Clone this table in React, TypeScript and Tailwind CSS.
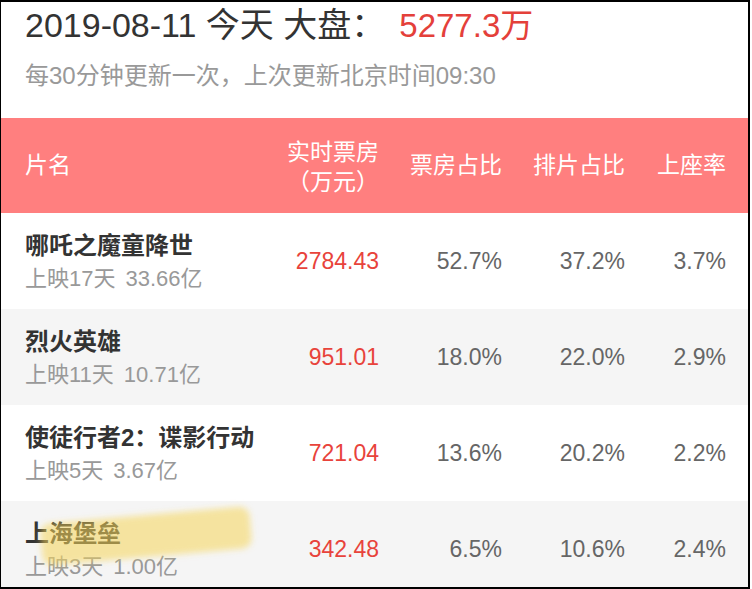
const font = "font-['Liberation_Sans','Noto_Sans_CJK_SC',sans-serif]";

interface Movie {
  name: string;
  days: string;
  total: string;
  box: string;
  boxRate: string;
  showRate: string;
  seatRate: string;
  highlight?: boolean;
}

const movies: Movie[] = [
  { name: "哪吒之魔童降世", days: "上映17天", total: "33.66亿", box: "2784.43", boxRate: "52.7%", showRate: "37.2%", seatRate: "3.7%" },
  { name: "烈火英雄", days: "上映11天", total: "10.71亿", box: "951.01", boxRate: "18.0%", showRate: "22.0%", seatRate: "2.9%" },
  { name: "使徒行者2：谍影行动", days: "上映5天", total: "3.67亿", box: "721.04", boxRate: "13.6%", showRate: "20.2%", seatRate: "2.2%" },
  { name: "上海堡垒", days: "上映3天", total: "1.00亿", box: "342.48", boxRate: "6.5%", showRate: "10.6%", seatRate: "2.4%", highlight: true },
];

const cols = "grid grid-cols-[minmax(0,1fr)_130px_123px_123px_101px] pl-[24px] pr-[22px]";

function Row({ movie, index }: { movie: Movie; index: number }) {
  return (
    <div className={`${cols} relative h-[96px] items-center ${index % 2 === 1 ? "bg-[#f5f5f5]" : "bg-white"}`}>
      <div className="flex flex-col gap-[6px] mt-[1px] whitespace-nowrap">
        <div className="text-[24px] leading-[28px] font-semibold text-[#333]">{movie.name}</div>
        <div className="text-[22px] leading-[26px] text-[#999]">
          {movie.days}
          <span className="ml-[10px]">{movie.total}</span>
        </div>
      </div>
      <div className="text-right text-[23px] text-[#e8433b]">{movie.box}</div>
      <div className="text-right text-[23px] text-[#666]">{movie.boxRate}</div>
      <div className="text-right text-[23px] text-[#666]">{movie.showRate}</div>
      <div className="text-right text-[23px] text-[#666]">{movie.seatRate}</div>
      {movie.highlight && (
        <div className="absolute left-[40px] top-[14px] w-[210px] h-[42px] -rotate-[5deg] rounded-[10px] bg-[#f6d55a]/55 blur-[3px] pointer-events-none" />
      )}
    </div>
  );
}

export default function App() {
  return (
    <div className={`${font} w-[752px] h-[589px] bg-white`}>
      <div className="w-[750px] h-[589px] border-t-2 border-r-2 border-b-2 border-l border-black overflow-hidden">
        <div className="pl-[24px] pt-[3px] h-[116px]">
          <div className="text-[34px] leading-[40px] text-[#333] whitespace-pre">
            2019-08-11 今天 大盘：<span className="ml-[14px] text-[33px] text-[#e4403a]">5277.3万</span>
          </div>
          <div className="mt-[15px] text-[24px] leading-[30px] text-[#999]">每30分钟更新一次，上次更新北京时间09:30</div>
        </div>
        <div className={`${cols} h-[95px] items-center bg-[#ff7f7f] text-white text-[23px]`}>
          <div>片名</div>
          <div className="text-right leading-[30px] pt-[2px]">
            <div>实时票房</div>
            <div>（万元）</div>
          </div>
          <div className="text-right">票房占比</div>
          <div className="text-right">排片占比</div>
          <div className="text-right">上座率</div>
        </div>
        {movies.map((m, i) => (
          <Row key={m.name} movie={m} index={i} />
        ))}
      </div>
    </div>
  );
}
